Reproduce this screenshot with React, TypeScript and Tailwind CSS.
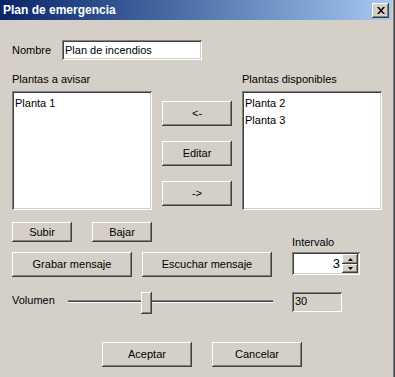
import React from 'react'

const raised =
  'bg-[#d4d0c8] shadow-[inset_-1px_-1px_0_#404040,inset_1px_1px_0_#ffffff,inset_-2px_-2px_0_#808080,inset_2px_2px_0_#d4d0c8]'
const sunken =
  'shadow-[inset_1px_1px_0_#808080,inset_-1px_-1px_0_#ffffff,inset_2px_2px_0_#404040,inset_-2px_-2px_0_#d4d0c8]'

function Button({ label, className }: { label: string; className: string }) {
  return (
    <button className={`${raised} ${className} flex items-center justify-center text-[11px] text-black`}>
      {label}
    </button>
  )
}

function ListBox({ items }: { items: string[] }) {
  return (
    <div className={`${sunken} bg-white w-[140px] h-[119px] pt-[4px] pl-[3px] flex flex-col`}>
      {items.map(item => (
        <div key={item} className="h-[17px] leading-[17px] text-[11px]">
          {item}
        </div>
      ))}
    </div>
  )
}

export default function App() {
  return (
    <div
      className="w-[395px] h-[377px] bg-[#d4d0c8] flex flex-col text-black overflow-hidden"
      style={{ fontFamily: '"Liberation Sans", Arial, sans-serif' }}
    >
      <div className="flex flex-1 flex-col pr-[3px] shadow-[inset_-1px_0_0_#404040,inset_-2px_0_0_#808080]">
        {/* title bar */}
        <div className="h-[20px] flex items-center justify-between bg-gradient-to-r from-[#0a246a] to-[#a6caf0] pl-[3px] pr-[3px]">
          <span className="text-white font-bold text-[12px]">Plan de emergencia</span>
          <div className={`${raised} w-[17px] h-[15px] flex items-center justify-center`}>
            <svg width="8" height="7" viewBox="0 0 8 7">
              <path d="M0 0h2l2 2.5L6 0h2L5 3.5 8 7H6L4 4.5 2 7H0l3-3.5z" fill="#000" />
            </svg>
          </div>
        </div>

        <div className="flex flex-col pl-[12px] pt-[20px] text-[11px]">
          {/* nombre */}
          <div className="flex items-center h-[20px]">
            <span className="w-[50px]">Nombre</span>
            <div className={`${sunken} bg-white w-[140px] h-[20px] pl-[3px] flex items-center`}>Plan de incendios</div>
          </div>

          {/* labels */}
          <div className="flex mt-[12px] h-[14px] items-center">
            <span className="w-[230px]">Plantas a avisar</span>
            <span>Plantas disponibles</span>
          </div>

          {/* lists */}
          <div className="flex mt-[5px] gap-[10px]">
            <ListBox items={['Planta 1']} />
            <div className="flex flex-col gap-[15px] pt-[10px]">
              <Button label="<-" className="w-[70px] h-[25px]" />
              <Button label="Editar" className="w-[70px] h-[25px]" />
              <Button label="->" className="w-[70px] h-[25px]" />
            </div>
            <ListBox items={['Planta 2', 'Planta 3']} />
          </div>

          {/* subir / bajar */}
          <div className="flex mt-[12px] h-[20px]">
            <Button label="Subir" className="w-[60px] h-[20px]" />
            <Button label="Bajar" className="w-[60px] h-[20px] ml-[20px]" />
            <span className="ml-[140px] mt-[12px]">Intervalo</span>
          </div>

          {/* grabar / escuchar / spinner */}
          <div className="flex mt-[10px] items-start">
            <Button label="Grabar mensaje" className="w-[120px] h-[25px]" />
            <Button label="Escuchar mensaje" className="w-[130px] h-[25px] ml-[10px]" />
            <div className={`${sunken} bg-white w-[68px] h-[23px] ml-[20px] flex items-center justify-end p-[2px]`}>
              <span className="text-[13px] mr-[2px]">3</span>
              <div className="flex flex-col w-[16px] h-[19px]">
                <div className={`${raised} h-[10px] flex items-center justify-center`}>
                  <svg width="5" height="3" viewBox="0 0 5 3">
                    <path d="M2.5 0L5 3H0z" fill="#000" />
                  </svg>
                </div>
                <div className={`${raised} h-[9px] flex items-center justify-center`}>
                  <svg width="5" height="3" viewBox="0 0 5 3">
                    <path d="M0 0h5L2.5 3z" fill="#000" />
                  </svg>
                </div>
              </div>
            </div>
          </div>

          {/* volumen */}
          <div className="flex mt-[15px] h-[22px] items-center">
            <span className="w-[56px] -mt-[6px]">Volumen</span>
            <div className="relative w-[205px] h-[22px]">
              <div className="absolute left-0 right-0 top-[8px] h-[3px] border-t border-[#808080] bg-[#404040] border-b border-b-white" />
              <div className={`${raised} absolute left-[73px] top-0 w-[11px] h-[22px]`} />
            </div>
            <div className={`${sunken} w-[50px] h-[20px] ml-[19px] mt-[-3px] pl-[3px] flex items-center`}>30</div>
          </div>

          {/* aceptar / cancelar */}
          <div className="flex mt-[28px] pl-[90px] gap-[20px]">
            <Button label="Aceptar" className="w-[90px] h-[25px]" />
            <Button label="Cancelar" className="w-[90px] h-[25px]" />
          </div>
        </div>
      </div>
    </div>
  )
}
